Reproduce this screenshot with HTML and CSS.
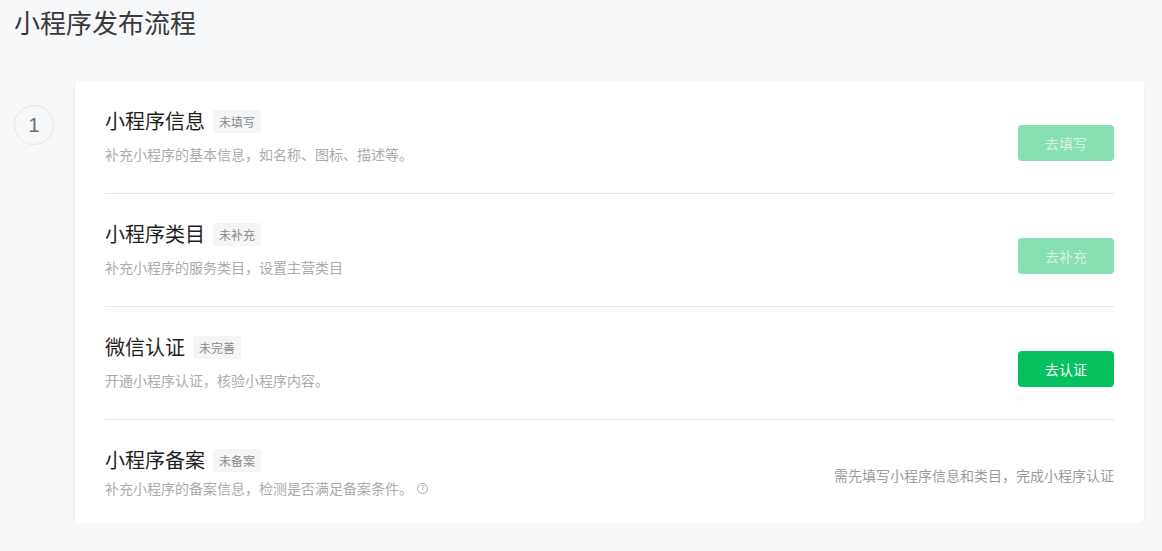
FILE: index.html
```html
<!DOCTYPE html>
<html lang="zh-CN">
<head>
<meta charset="utf-8">
<title>小程序发布流程</title>
<link rel="stylesheet" href="styles.css">
</head>
<body>
<div class="page">
  <h1 class="page-title">小程序发布流程</h1>
  <div class="step">
    <div class="step-index">1</div>
    <div class="card">
      <div class="row">
        <div class="row-main">
          <div class="row-head">
            <span class="row-title">小程序信息</span>
            <span class="tag">未填写</span>
          </div>
          <div class="row-desc">补充小程序的基本信息，如名称、图标、描述等。</div>
        </div>
        <button class="btn btn-disabled">去填写</button>
      </div>
      <div class="row">
        <div class="row-main">
          <div class="row-head">
            <span class="row-title">小程序类目</span>
            <span class="tag">未补充</span>
          </div>
          <div class="row-desc">补充小程序的服务类目，设置主营类目</div>
        </div>
        <button class="btn btn-disabled">去补充</button>
      </div>
      <div class="row">
        <div class="row-main">
          <div class="row-head">
            <span class="row-title">微信认证</span>
            <span class="tag">未完善</span>
          </div>
          <div class="row-desc">开通小程序认证，核验小程序内容。</div>
        </div>
        <button class="btn btn-primary">去认证</button>
      </div>
      <div class="row row-last">
        <div class="row-main">
          <div class="row-head">
            <span class="row-title">小程序备案</span>
            <span class="tag">未备案</span>
          </div>
          <div class="row-desc">补充小程序的备案信息，检测是否满足备案条件。<span class="help">?</span></div>
        </div>
        <div class="row-note">需先填写小程序信息和类目，完成小程序认证</div>
      </div>
    </div>
  </div>
</div>
</body>
</html>
```
FILE: styles.css
```css
* { box-sizing: border-box; }
html, body {
  margin: 0;
  padding: 0;
  background: #f7f8fa;
  font-family: "Noto Sans CJK SC", "Noto Sans", "Liberation Sans", sans-serif;
  color: #333;
}
.page {
  padding: 4px 18px 0 14px;
}
.page-title {
  margin: 0;
  font-size: 26px;
  line-height: 36px;
  font-weight: 400;
  color: #3a3a3a;
}
.step {
  display: flex;
  align-items: flex-start;
  gap: 21px;
  margin-top: 41px;
}
.step-index {
  flex: none;
  width: 40px;
  height: 40px;
  margin-top: 24px;
  border: 1.5px solid #e4e5e7;
  border-radius: 50%;
  display: flex;
  align-items: center;
  justify-content: center;
  font-family: "Liberation Sans", "Noto Sans", sans-serif;
  font-size: 20px;
  color: #6b6b6b;
}
.card {
  flex: 1;
  background: #fff;
  border-radius: 4px;
  box-shadow: 0 1px 3px rgba(0, 0, 0, 0.07);
  padding: 0 30px;
}
.row {
  display: flex;
  align-items: flex-start;
  justify-content: space-between;
  padding: 29px 0;
  border-bottom: 1px solid #e7e7e7;
}
.row-last {
  border-bottom: none;
  padding-bottom: 25px;
  align-items: center;
}
.row-head {
  display: flex;
  align-items: center;
  gap: 8px;
  height: 22px;
}
.row-title {
  font-size: 20px;
  line-height: 22px;
  color: #1f1f1f;
}
.tag {
  display: inline-block;
  background: #f4f5f6;
  color: #8a8a8a;
  font-size: 12px;
  line-height: 23px;
  padding: 0 6px;
  border-radius: 2px;
}
.row-desc {
  margin-top: 12px;
  font-size: 14px;
  line-height: 20px;
  color: #ababab;
  display: flex;
  align-items: center;
}
.row-last .row-desc {
  margin-top: 7px;
}
.help {
  display: inline-flex;
  align-items: center;
  justify-content: center;
  width: 11px;
  height: 11px;
  margin-left: 4px;
  border: 1px solid #a8a8a8;
  border-radius: 50%;
  font-family: "Liberation Sans", sans-serif;
  font-size: 8px;
  line-height: 1;
  color: #999;
}
.btn {
  flex: none;
  width: 96px;
  height: 36px;
  margin-top: 15px;
  border: none;
  border-radius: 4px;
  font-family: inherit;
  font-size: 14px;
  cursor: pointer;
}
.btn-disabled {
  background: #86e0b1;
  color: rgba(255, 255, 255, 0.65);
}
.btn-primary {
  background: #07c160;
  color: #fff;
}
.row-note {
  margin-top: 2px;
  font-size: 14px;
  line-height: 20px;
  color: #9c9c9c;
}
```
